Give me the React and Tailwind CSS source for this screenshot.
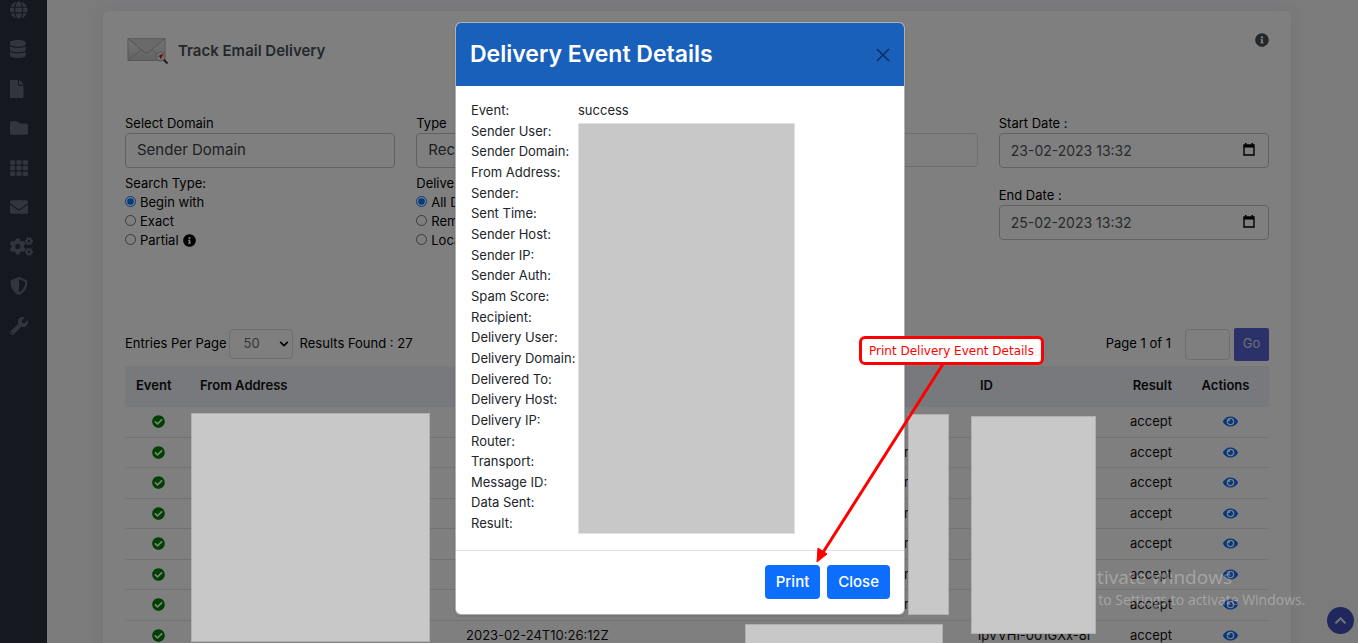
import { FaCheckCircle, FaChevronDown, FaChevronUp, FaCogs, FaDatabase, FaEnvelope, FaEye, FaFile, FaFolder, FaGlobe, FaInfoCircle, FaShieldAlt, FaTh, FaWrench } from 'react-icons/fa';

const navItems = [
  { label: 'Domains', Icon: FaGlobe },
  { label: 'Databases', Icon: FaDatabase },
  { label: 'Files', Icon: FaFile },
  { label: 'Folders', Icon: FaFolder },
  { label: 'Apps', Icon: FaTh },
  { label: 'Email', Icon: FaEnvelope },
  { label: 'Settings', Icon: FaCogs },
  { label: 'Security', Icon: FaShieldAlt },
  { label: 'Tools', Icon: FaWrench },
];

const rows = [
  { id: 1 },
  { id: 2, host: 'r' },
  { id: 3, host: 'r' },
  { id: 4, host: 'r' },
  { id: 5, host: 'r' },
  { id: 6, host: 'r' },
  { id: 7, host: 'r' },
  { id: 8, sent: '2023-02-24T10:26:12Z', messageId: '1pVVHI-001GXx-8I' },
];

const details = [
  'Event:',
  'Sender User:',
  'Sender Domain:',
  'From Address:',
  'Sender:',
  'Sent Time:',
  'Sender Host:',
  'Sender IP:',
  'Sender Auth:',
  'Spam Score:',
  'Recipient:',
  'Delivery User:',
  'Delivery Domain:',
  'Delivered To:',
  'Delivery Host:',
  'Delivery IP:',
  'Router:',
  'Transport:',
  'Message ID:',
  'Data Sent:',
  'Result:',
];

function Sidebar() {
  return (
    <nav className="flex w-[47px] shrink-0 flex-col gap-5 bg-[#2c303f] pl-[10px] text-[13px] leading-normal text-[#676b79]">
      {navItems.map(({ label, Icon }) => (
        <a key={label} href="#" aria-label={label} className="flex h-[1lh] items-center">
          <Icon preserveAspectRatio="xMinYMid meet" className={label === 'Settings' ? 'size-[23px]' : 'size-[18px]'} />
        </a>
      ))}
    </nav>
  );
}

function MailIcon() {
  return (
    <svg viewBox="0 0 42 28" className="h-7 w-[42px]" aria-hidden="true">
      <defs>
        <linearGradient id="paper" x1="0" y1="0" x2="0" y2="1">
          <stop offset="0" stopColor="#ececec" />
          <stop offset="1" stopColor="#c6c6c6" />
        </linearGradient>
      </defs>
      <rect x="1" y="1.500" width="37" height="22" fill="url(#paper)" stroke="#b0b0b0" />
      <path d="M1 23 14 13M38 23 25 13" fill="none" stroke="#adadad" />
      <path d="M1 1.500 17 15q3 2 5 0L38 1.500" fill="#d4d4d4" stroke="#a8a8a8" />
      <path d="m36.500 22.500 4 4" stroke="#3d3d3d" strokeWidth="2" />
      <circle cx="33.500" cy="19.500" r="4.500" fill="#e4e4e4" stroke="#aaa" />
      <path d="m30.500 19.500 6-3-3 6-.5-3z" fill="#e00000" />
    </svg>
  );
}

function RadioGroup({ title, name, options, info }) {
  return (
    <fieldset className="mt-[5px] text-[13px] leading-[19px]">
      <legend className="leading-5">{title}</legend>
      {options.map((option, index) => (
        <label key={option} className="flex items-center">
          <input type="radio" name={name} defaultChecked={index === 0} className="mr-1 mb-[3px] size-[11px]" />
          <span className="whitespace-nowrap">{option}</span>
          {info && index === options.length - 1 && <FaInfoCircle className="ml-1 size-[13px]" />}
        </label>
      ))}
    </fieldset>
  );
}

function SelectField({ label, id, value }) {
  return (
    <div>
      <label htmlFor={id} className="block text-[13px] leading-5">{label}</label>
      <select id={id} className="block h-[35px] w-full appearance-none rounded border border-[#bfc4c9] px-[11px] text-[15px] text-[#3d4248]">
        <option>{value}</option>
      </select>
    </div>
  );
}

function DateField({ label, id, value }) {
  return (
    <div>
      <label htmlFor={id} className="block text-[13px] leading-5">{label}</label>
      <div className="relative">
        <input id={id} defaultValue={value} className="block h-[35px] w-full rounded border border-[#bfc4c9] px-[11px] text-[14px] text-[#50555b]" />
        <svg viewBox="0 0 12 13" className="absolute top-[10px] right-[14px] h-[13px] w-3" aria-hidden="true">
          <path d="M1 2h10v10H1z" fill="none" stroke="#000" strokeWidth="1.4" />
          <path d="M1 2h10v2.5H1zM2 0h1.5v2H2zM8.500 0H10v2H8.500z" />
        </svg>
      </div>
    </div>
  );
}

function SearchForm() {
  return (
    <form className="mt-12 grid grid-cols-4 gap-[21px]">
      <div>
        <SelectField label="Select Domain" id="domain" value="Sender Domain" />
        <RadioGroup title="Search Type:" name="search" options={['Begin with', 'Exact', 'Partial']} info />
      </div>
      <div>
        <SelectField label="Type" id="type" value="Recipient" />
        <RadioGroup title="Delivery Type:" name="delivery" options={['All Deliveries', 'Remote', 'Local']} />
      </div>
      <div className="pt-5">
        <input aria-label="Search" className="block h-[34px] w-full rounded border border-[#d8dce0] px-[11px]" />
      </div>
      <div className="flex flex-col gap-[17px]">
        <DateField label="Start Date :" id="start" value="23-02-2023 13:32" />
        <DateField label="End Date :" id="end" value="25-02-2023 13:32" />
      </div>
    </form>
  );
}

function TableControls() {
  return (
    <div className="mt-[77px] flex h-[34px] items-center text-[13px]">
      <label htmlFor="entries">Entries Per Page</label>
      <div className="relative mr-[7px] ml-[2px]">
        <select id="entries" className="block h-[30px] w-16 appearance-none rounded border border-[#d8dce0] px-[14px] text-[13px] text-[#6c7075]">
          <option>50</option>
        </select>
        <FaChevronDown className="pointer-events-none absolute top-[10px] right-1 size-[10px]" />
      </div>
      <span>Results Found : 27</span>
      <label htmlFor="page" className="mr-[14px] ml-auto">Page 1 of 1</label>
      <input id="page" className="h-[31px] w-[45px] rounded border border-[#d8dce0]" />
      <button type="button" className="ml-1 h-[33px] w-[35px] rounded-xs bg-[#5664d2] text-[#d9dcf6]">Go</button>
    </div>
  );
}

function ResultsTable() {
  return (
    <table className="mt-[5px] w-full table-fixed text-left text-[13px] leading-normal text-[#111]">
      <colgroup>
        <col className="w-[66px]" />
        <col className="w-[266px]" />
        <col className="w-[164px]" />
        <col />
        <col className="w-[151px]" />
        <col className="w-[60px]" />
        <col className="w-[87px]" />
      </colgroup>
      <thead>
        <tr className="h-[41px] bg-[#eff2f9]">
          <th className="pb-0.5 pl-[11px] font-semibold">Event</th>
          <th className="pb-0.5 pl-[9px] font-semibold">From Address</th>
          <th></th>
          <th></th>
          <th className="pb-0.5 pl-[9px] font-semibold">ID</th>
          <th className="pr-[10px] pb-0.5 text-right font-semibold">Result</th>
          <th className="pb-0.5 text-center font-semibold">Actions</th>
        </tr>
      </thead>
      <tbody>
        {rows.map((row) => (
          <tr key={row.id} className="border-b border-[#e3e5ee]">
            <td className="py-[5px]"><FaCheckCircle className="mx-auto size-[13px] text-[#008000]" /></td>
            <td></td>
            <td className="pl-[9px]">{row.sent}</td>
            <td className="pr-[62px] text-right">{row.host}</td>
            <td className="pl-[5px]">{row.messageId}</td>
            <td className="py-[5px] pr-[10px] text-right">accept</td>
            <td className="pl-[9px]">
              <button type="button" aria-label="View details" className="mx-auto block">
                <FaEye className="size-[15px] text-[#0d6efd]" />
              </button>
            </td>
          </tr>
        ))}
      </tbody>
    </table>
  );
}

function DetailsModal() {
  return (
    <section role="dialog" aria-labelledby="modal-title" className="relative w-[450px] rounded-md border border-black/30 bg-white shadow">
      <header className="flex h-[63px] items-center justify-between rounded-t-[5px] bg-[#1960bb] px-[14px] text-white">
        <h2 id="modal-title" className="text-[23px] font-semibold">Delivery Event Details</h2>
        <button type="button" aria-label="Close dialog">
          <svg viewBox="0 0 14 14" className="size-[14px]" fill="none" stroke="#0c2f5c" strokeWidth="1.500">
            <path d="m1 1 12 12M13 1 1 13" />
          </svg>
        </button>
      </header>
      <div className="px-[15px] pt-[14px] pb-4">
        <dl className="text-[13px] leading-[1.59] text-[#212529]">
          {details.map((label) => (
            <div key={label} className="flex">
              <dt className="w-[107px] whitespace-nowrap">{label}</dt>
              <dd>{label === 'Event:' && 'success'}</dd>
            </div>
          ))}
        </dl>
      </div>
      <footer className="flex h-16 items-center justify-end gap-[7px] border-t border-[#dee2e6] px-[14px] text-[15px] font-medium text-white">
        <button type="button" className="h-[34px] rounded bg-[#0d6efd] px-[11px]">Print</button>
        <button type="button" className="h-[34px] rounded bg-[#0d6efd] px-[11px]">Close</button>
      </footer>
    </section>
  );
}

function Callout() {
  return (
    <>
      <svg viewBox="0 0 140 210" className="absolute top-[360px] left-[810px] h-[210px] w-[140px]" aria-hidden="true">
        <path d="M133 4 12 194" stroke="#f00" strokeWidth="3" />
        <path d="m7 202 1-14 9 6z" fill="#f00" stroke="#f00" strokeWidth="1" />
      </svg>
      <div className="absolute top-[336px] left-[859px] flex h-[29px] w-[185px] items-center justify-center rounded-md border-3 border-[#f00] bg-white font-['DejaVu_Sans',sans-serif] text-[12px] whitespace-nowrap text-[#f00]">
        Print Delivery Event Details
      </div>
    </>
  );
}

export default function App() {
  return (
    <div className="relative h-screen overflow-hidden bg-[#f6f6f9] font-['Inter',sans-serif] text-black">
      <div className="flex min-h-screen">
        <Sidebar />
        <main className="min-w-0 flex-1 pt-[11px] pr-[67px] pl-14">
          <div className="min-h-screen rounded-md bg-white px-[22px] pt-[22px] shadow-[0_0_16px_rgba(18,38,63,0.06)]">
            <header className="flex h-8 items-start justify-between">
              <div className="flex items-center gap-[9px] pt-1 pl-[2px]">
                <MailIcon />
                <h1 className="text-[15px] font-semibold text-[#495057]">Track Email Delivery</h1>
              </div>
              <FaInfoCircle className="size-[14px] text-[#495057]" />
            </header>
            <SearchForm />
            <TableControls />
            <ResultsTable />
          </div>
        </main>
      </div>
      <button type="button" aria-label="Back to top" className="absolute right-1 bottom-[9px] flex size-[27px] items-center justify-center rounded-full bg-[#404fb8] text-[#e5e7f4]">
        <FaChevronUp className="size-[13px]" />
      </button>

      <div className="absolute inset-0 flex items-start justify-center bg-black/50 pt-[22px] pl-0.5">
        <DetailsModal />
      </div>

      <div className="absolute top-[565px] left-[1076px] font-['Open_Sans',sans-serif] whitespace-nowrap text-white/30">
        <p className="text-[19px] leading-6">Activate Windows</p>
        <p className="text-[14px] leading-[22px]">Go to Settings to activate Windows.</p>
      </div>

      {/* masks over private values */}
      <div className="absolute top-[123px] left-[578px] h-[411px] w-[217px] border border-[#e2e2e2] bg-[#c8c8c8]" />
      <div className="absolute top-[413px] left-[191px] h-[229px] w-[239px] border border-[#b0b0b0] bg-[#c8c8c8]" />
      <div className="absolute top-[414px] left-[908px] h-[201px] w-[41px] border border-[#b0b0b0] bg-[#c8c8c8]" />
      <div className="absolute top-[416px] left-[971px] h-[218px] w-[125px] border border-[#b0b0b0] bg-[#c8c8c8]" />
      <div className="absolute top-[624px] left-[745px] h-[19px] w-[198px] border border-b-0 border-[#b0b0b0] bg-[#c8c8c8]" />
      <Callout />
    </div>
  );
}
